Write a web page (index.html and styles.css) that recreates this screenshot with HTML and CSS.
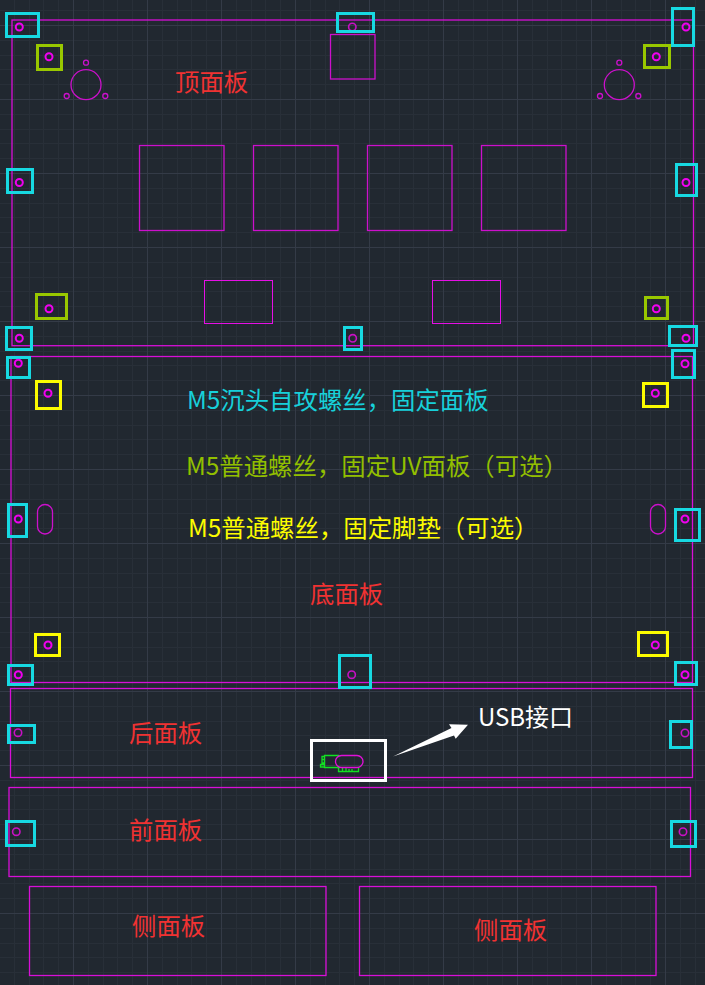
FILE: index.html
```html
<!DOCTYPE html>
<html lang="zh-CN">
<head>
<meta charset="utf-8">
<title>面板布局图</title>
<link rel="stylesheet" href="styles.css">
</head>
<body>
<svg class="canvas" width="705" height="985" viewBox="0 0 705 985" xmlns="http://www.w3.org/2000/svg">
<defs>
<pattern id="grid" width="74" height="74" patternUnits="userSpaceOnUse" x="73" y="25">
<path class="grid-minor" d="M15.5 0V74M30.500 0V74M44.500 0V74M59.500 0V74M0 15.500H74M0 30.500H74M0 44.500H74M0 59.500H74"/>
<path class="grid-major" d="M.5 0V74M0 .5H74"/>
</pattern>
</defs>
<rect class="grid-fill" width="705" height="985"/>

<g class="outline">
<rect x="12" y="20" width="681.500" height="325.700"/>
<rect x="11" y="356.500" width="681.500" height="326"/>
<rect x="10.500" y="688.500" width="682" height="89"/>
<rect x="9" y="787.500" width="681.500" height="89"/>
<rect x="29.500" y="886.500" width="296.500" height="89"/>
<rect x="359.500" y="886.500" width="296.500" height="89"/>
</g>
<g class="thin">
<rect x="330.500" y="34.500" width="44.500" height="44.500"/>
<rect x="139.500" y="145.500" width="84.500" height="85"/>
<rect x="253.500" y="145.500" width="84.500" height="85"/>
<rect x="367.500" y="145.500" width="84.500" height="85"/>
<rect x="481.500" y="145.500" width="84.500" height="85"/>
<rect class="bright" x="204.500" y="280.500" width="68" height="43"/>
<rect class="bright" x="432.500" y="280.500" width="68" height="43"/>
<circle cx="86" cy="84.700" r="15"/><circle cx="86" cy="62.700" r="2.500"/><circle cx="66.700" cy="96" r="2.500"/><circle cx="105.300" cy="96" r="2.500"/>
<circle cx="619.300" cy="84.700" r="15"/><circle cx="619.300" cy="62.700" r="2.500"/><circle cx="600" cy="96" r="2.500"/><circle cx="638.300" cy="96" r="2.500"/>
<rect x="37.500" y="504.500" width="15" height="29.500" rx="7.500"/>
<rect x="650.500" y="504.500" width="15" height="29.500" rx="7.500"/>
</g>

<g class="hole-thin">
<circle cx="352.300" cy="27" r="3.700"/>
<circle cx="352.700" cy="338.300" r="3.700"/>
<circle cx="351.700" cy="674.700" r="3.700"/>
<circle cx="18" cy="732.700" r="3.700"/><circle cx="685" cy="733" r="3.700"/>
<circle cx="16.300" cy="831.700" r="3.700"/><circle cx="683" cy="831.700" r="3.700"/>
</g>

<g class="cyan">
<rect x="6.500" y="13.500" width="32" height="23"/>
<rect x="337.500" y="13.500" width="36" height="18"/>
<rect x="672.500" y="8.500" width="21" height="37"/>
<rect x="7.500" y="169.500" width="25" height="23"/>
<rect x="676.500" y="164.500" width="20" height="31"/>
<rect x="6.500" y="327.500" width="25" height="22"/>
<rect x="344.500" y="327.500" width="17" height="22"/>
<rect x="669.500" y="326.500" width="27" height="19"/>
<rect x="7.500" y="357.500" width="22" height="20"/>
<rect x="672.500" y="350.500" width="22" height="27"/>
<rect x="8.500" y="504.500" width="18" height="32"/>
<rect x="675.500" y="509.500" width="24" height="31"/>
<rect x="8.500" y="665.500" width="24" height="19"/>
<rect x="339.500" y="655.500" width="31" height="32"/>
<rect x="675.500" y="662.500" width="21" height="22"/>
<rect x="8.500" y="725.500" width="26" height="17"/>
<rect x="670.500" y="721.500" width="21" height="26"/>
<rect x="6.500" y="821.500" width="28" height="24"/>
<rect x="671.500" y="821.500" width="24" height="25"/>
</g>
<g class="green">
<rect x="37.500" y="45.500" width="24" height="24"/>
<rect x="644.500" y="45.500" width="25" height="22"/>
<rect x="36.500" y="294.500" width="30" height="24"/>
<rect x="645.500" y="297.500" width="22" height="21"/>
</g>
<g class="yellow">
<rect x="36.500" y="381.500" width="24" height="27"/>
<rect x="643.500" y="383.500" width="24" height="23"/>
<rect x="35.500" y="634.500" width="24" height="21"/>
<rect x="638.500" y="632.500" width="29" height="23"/>
</g>
<g class="hole">
<circle cx="19.300" cy="27" r="3.500"/><circle cx="49" cy="56.700" r="3.500"/><circle cx="19.300" cy="182.500" r="3.500"/>
<circle cx="686" cy="27" r="3.500"/><circle cx="656.300" cy="56.700" r="3.500"/><circle cx="686" cy="182.500" r="3.500"/>
<circle cx="49" cy="308.700" r="3.500"/><circle cx="656.300" cy="308.700" r="3.500"/>
<circle cx="19.300" cy="338.300" r="3.500"/><circle cx="686" cy="338.300" r="3.500"/>
<circle cx="18.300" cy="363.300" r="3.500"/><circle cx="685" cy="363.700" r="3.500"/>
<circle cx="48" cy="393.300" r="3.500"/><circle cx="655.300" cy="393.300" r="3.500"/>
<circle cx="18.300" cy="519" r="3.500"/><circle cx="685" cy="519" r="3.500"/>
<circle cx="48" cy="645" r="3.500"/><circle cx="655.300" cy="645" r="3.500"/>
<circle cx="18.300" cy="674.700" r="3.500"/><circle cx="685" cy="674.700" r="3.500"/>
</g>

<rect class="white-box" x="311.500" y="740.500" width="74" height="40"/>
<path class="usb-green" d="M339 755.500H324.500V767.500H340M322 756.500H324.500V763H322ZM322 759.500H324.500M320.500 764.500H324.500V767H320.500ZM338.500 767.500V771.500H358.500V767.500M342.500 768V771M346 767V771M349 769V771M352 769V771"/>
<rect class="usb-slot" x="335.500" y="755.500" width="27.500" height="12" rx="6"/>
<polygon class="arrow" points="393,756.500 451.500,728 449,724.300 468,724.700 455.700,738.700 454,735.500"/>

<text class="label red" x="175" y="91">顶面板</text>
<text class="label cyan-text" x="187" y="409">M5沉头自攻螺丝，固定面板</text>
<text class="label green-text" x="186" y="475">M5普通螺丝，固定UV面板（可选）</text>
<text class="label yellow-text" x="188" y="537">M5普通螺丝，固定脚垫（可选）</text>
<text class="label red" x="310" y="603">底面板</text>
<text class="label red" x="129" y="742">后面板</text>
<text class="label white-text" x="478" y="726">USB接口</text>
<text class="label red" x="129" y="839">前面板</text>
<text class="label red" x="132" y="935">侧面板</text>
<text class="label red" x="474" y="939">侧面板</text>
</svg>
</body>
</html>
```

FILE: styles.css
```css
html, body {
  margin: 0;
  padding: 0;
  background: #212830;
}
.canvas {
  display: block;
  background: #212830;
}
.grid-fill { fill: url(#grid); }
.grid-minor { fill: none; stroke: #282f38; stroke-width: 1; }
.grid-major { fill: none; stroke: #343b47; stroke-width: 1; }
.outline rect { fill: none; stroke: #d80fd8; stroke-width: 1.3; }
.thin rect, .thin circle { fill: none; stroke: #cc10cc; stroke-width: 1.3; }
.thin .bright { stroke: #e60fe6; stroke-width: 1; }
.cyan rect { fill: none; stroke: #17d9e2; stroke-width: 3; }
.green rect { fill: none; stroke: #99c800; stroke-width: 3; }
.yellow rect { fill: none; stroke: #fcfc00; stroke-width: 3; }
.hole circle { fill: none; stroke: #f000f0; stroke-width: 2; }
.hole-thin circle { fill: none; stroke: #c810c4; stroke-width: 1.6; }
.white-box { fill: none; stroke: #ffffff; stroke-width: 3; }
.usb-green { fill: none; stroke: #12e022; stroke-width: 1.3; }
.usb-slot { fill: none; stroke: #e010d8; stroke-width: 1.3; }
.arrow { fill: #ffffff; }
.label {
  font-family: "Noto Sans CJK SC", "Open Sans", sans-serif;
  font-size: 24.4px;
}
.red { fill: #f03232; }
.cyan-text { fill: #17d0da; }
.green-text { fill: #92bf00; }
.yellow-text { fill: #fcfc00; }
.white-text { fill: #ffffff; font-size: 24px; }
```
